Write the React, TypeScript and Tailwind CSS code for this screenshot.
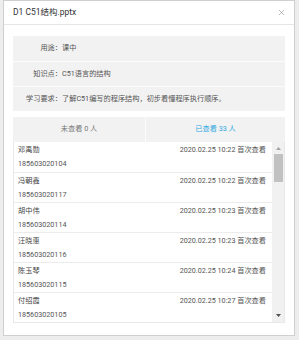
import { X } from "lucide-react";

interface Viewer {
    name: string;
    id: string;
    time: string;
}

const VIEWERS: Viewer[] = [
    { name: "邓禹勋", id: "185603020104", time: "2020.02.25 10:22" },
    { name: "冯朝鑫", id: "185603020117", time: "2020.02.25 10:22" },
    { name: "胡中伟", id: "185603020114", time: "2020.02.25 10:23" },
    { name: "汪晓惠", id: "185603020116", time: "2020.02.25 10:23" },
    { name: "陈玉琴", id: "185603020115", time: "2020.02.25 10:24" },
    { name: "付绍霞", id: "185603020105", time: "2020.02.25 10:27" },
];

const INFO = [
    { label: "用途：", value: "课中" },
    { label: "知识点：", value: "C51语言的结构" },
    { label: "学习要求：", value: "了解C51编写的程序结构，初步看懂程序执行顺序。" },
];

export default function App() {
    return (
        <div className="min-h-screen bg-[#ededed] pl-[3px] pr-[4px] font-['Roboto','Noto_Sans_CJK_SC',sans-serif]">
            <div className="w-[292px] bg-white border border-[#cfcfcf]">

                {/* ── HEADER ── */}
                <div className="h-[24px] flex items-center justify-between pl-[9px] pr-[8px] border-b border-[#e6e6e6]">
                    <span className="text-[8.5px] text-[#333]">D1 C51结构.pptx</span>
                    <X size={9} strokeWidth={1.3} className="text-[#777]" />
                </div>

                <div className="px-[9px] pt-[11px] pb-[12px]">

                    {/* ── INFO ── */}
                    <div className="bg-[#f2f2f2] text-[7.2px] text-[#555]">
                        {INFO.map((row, i) => (
                            <div
                                key={row.label}
                                className={`h-[25px] flex items-center ${i > 0 ? "border-t border-[#fbfbfb]" : ""}`}
                            >
                                <span className="w-[49px] text-right shrink-0">{row.label}</span>
                                <span>{row.value}</span>
                            </div>
                        ))}
                    </div>

                    {/* ── TABS ── */}
                    <div className="mt-[6px] h-[25px] flex bg-[#f2f2f2] text-[7.2px]">
                        <div className="w-[133px] flex items-center justify-center text-[#777] border-r border-[#fbfbfb]">
                            未查看 0 人
                        </div>
                        <div className="flex-1 flex items-center justify-center text-[#2fa9df]">
                            已查看 33 人
                        </div>
                    </div>

                    {/* ── LIST ── */}
                    <div className="flex border-x border-b border-[#e8e8e8]">
                        <div className="flex-1">
                            {VIEWERS.map((v, i) => (
                                <div
                                    key={v.id}
                                    className={`h-[30px] pt-[1px] pl-[4px] pr-[6px] text-[7.2px] leading-[14px] ${i > 0 ? "border-t border-[#ececec]" : ""}`}
                                >
                                    <div className="flex justify-between">
                                        <span className="text-[#444]">{v.name}</span>
                                        <span className="text-[#555]">{v.time} 首次查看</span>
                                    </div>
                                    <div className="text-[#555]">{v.id}</div>
                                </div>
                            ))}
                        </div>

                        {/* scrollbar */}
                        <div className="w-[12px] bg-[#f1f1f1] flex flex-col items-center">
                            <div className="h-[12px] flex items-center justify-center">
                                <svg width="5" height="3" viewBox="0 0 5 3">
                                    <path d="M0 3 L2.5 0 L5 3 Z" fill="#a3a3a3" />
                                </svg>
                            </div>
                            <div className="w-[9px] h-[28px] bg-[#c1c1c1]" />
                            <div className="flex-1" />
                            <div className="h-[14px] flex items-center justify-center">
                                <svg width="5" height="3" viewBox="0 0 5 3">
                                    <path d="M0 0 L5 0 L2.5 3 Z" fill="#505050" />
                                </svg>
                            </div>
                        </div>
                    </div>

                </div>
            </div>
        </div>
    );
}
